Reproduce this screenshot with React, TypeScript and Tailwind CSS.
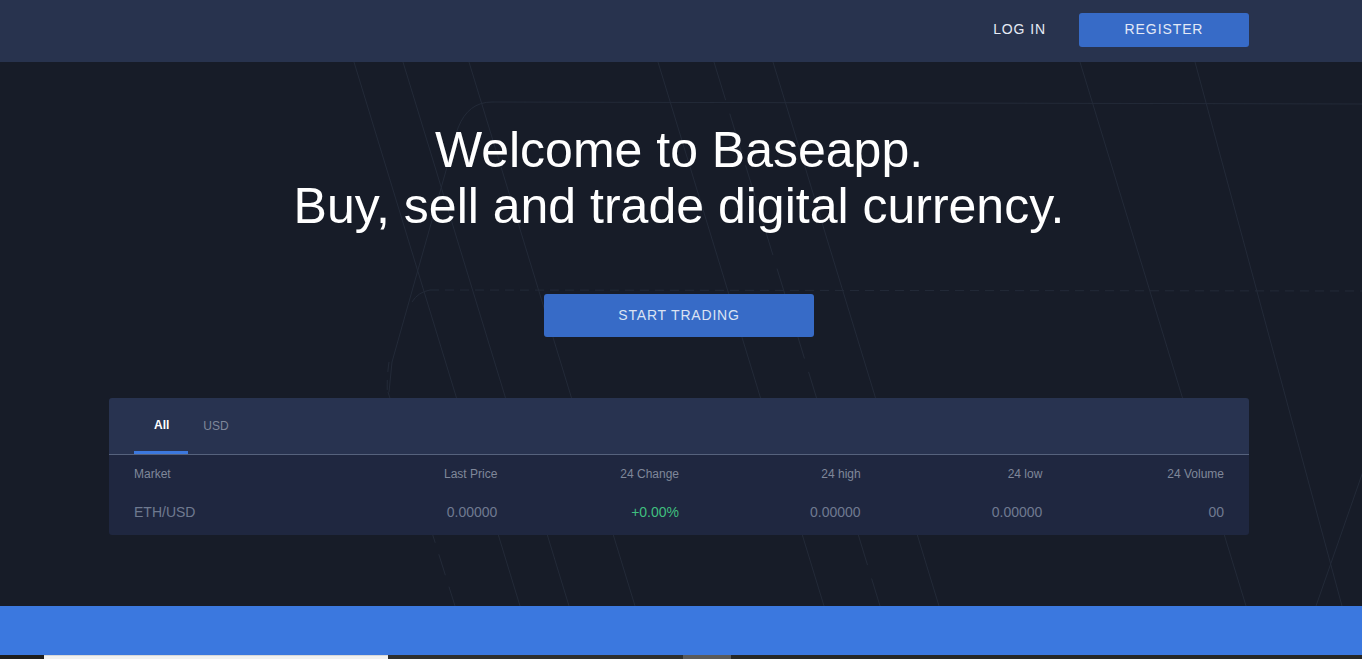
import React from "react";

const font = { fontFamily: '"Liberation Sans", Arial, sans-serif' };

function BgLines() {
  const solid = [
    [354, 520],
    [403, 569],
    [469, 635],
    [658, 824],
    [773, 939],
    [1080, 1246],
    [1195, 1342],
    [1506, 1316],
  ];
  return (
    <svg
      className="absolute inset-0 h-full w-full"
      viewBox="0 0 1362 544"
      preserveAspectRatio="none"
      fill="none"
    >
      <g stroke="#232a38" strokeWidth="1">
        {solid.map(([a, b], i) => (
          <line key={i} x1={a} y1={0} x2={b} y2={544} />
        ))}
        <line x1={714} y1={0} x2={880} y2={544} strokeDasharray="40 14" />
        <line x1={388} y1={330} x2={455} y2={544} strokeDasharray="22 12" />
        <path d="M1362 42 L492 40 Q468 40 458 66 L392 300 L389 330" />
        <path d="M389 300 Q386 320 388 340" strokeDasharray="10 8" />
        <path d="M430 228 L1362 229" strokeDasharray="9 6" />
        <path d="M430 228 Q418 230 412 240" />
      </g>
    </svg>
  );
}

export default function App() {
  const cols = ["Market", "Last Price", "24 Change", "24 high", "24 low", "24 Volume"];
  return (
    <div className="min-h-screen w-full bg-[#171c28]" style={font}>
      {/* Header */}
      <header className="flex h-[62px] items-center justify-end bg-[#28334e] pb-[3px] pr-[113px]">
        <button className="mr-[33px] text-[14px] tracking-[0.9px] text-[#e6ebf5]">LOG IN</button>
        <button className="h-[34px] w-[170px] rounded-[3px] bg-[#376bc7] text-[14px] tracking-[0.9px] text-[#e3e9f6]">
          REGISTER
        </button>
      </header>

      {/* Hero */}
      <section className="relative h-[544px] overflow-hidden">
        <BgLines />
        <div className="relative flex flex-col items-center pr-[4px] pt-[60px]">
          <h1 className="text-center text-[50px] leading-[56px] text-white">
            Welcome to Baseapp.
            <br />
            Buy, sell and trade digital currency.
          </h1>
          <button className="mt-[60px] h-[43px] w-[270px] rounded-[3px] bg-[#376bc7] text-[14px] tracking-[0.8px] text-[#dbe3f3]">
            START TRADING
          </button>

          <div className="mt-[61px] w-[1140px] overflow-hidden rounded-[3px]">
            <div className="flex h-[57px] items-end border-b border-[#56627d] bg-[#283350] pl-[25px]">
              <div className="flex h-full flex-col justify-between">
                <div className="flex flex-1 items-center px-[20px] pt-[1px] text-[12px] font-bold text-white">
                  All
                </div>
                <div className="h-[3px] w-[54px] bg-[#3c78de]"></div>
              </div>
              <div className="flex h-full items-center pb-[1px] pl-[14px] text-[12px] text-[#7f879a]">USD</div>
            </div>
            <div className="bg-[#1f2740] px-[25px] pb-[4px]">
              <div className="grid h-[38px] grid-cols-6 items-center text-[12px] text-[#7f879a]">
                {cols.map((c, i) => (
                  <div key={c} className={i === 0 ? "text-left" : "text-right"}>
                    {c}
                  </div>
                ))}
              </div>
              <div className="grid h-[38px] grid-cols-6 items-center text-[14px] text-[#6f7a90]">
                <div className="text-left">ETH/USD</div>
                <div className="text-right">0.00000</div>
                <div className="text-right text-[#3fbf7f]">+0.00%</div>
                <div className="text-right">0.00000</div>
                <div className="text-right">0.00000</div>
                <div className="text-right">00</div>
              </div>
            </div>
          </div>
        </div>
      </section>

      {/* Blue band */}
      <div className="h-[49px] bg-[#3b78df]"></div>

      {/* Next section strip */}
      <div className="flex h-[40px] bg-[#1d1d1d]">
        <div className="ml-[44px] w-[344px] border-t border-[#d8d8d8] bg-[#f1f1f1]"></div>
        <div className="w-[295px] bg-[#2e2f2e]"></div>
        <div className="w-[48px] bg-[#5a5a5a]"></div>
        <div className="flex-1 bg-[#262726]"></div>
      </div>
    </div>
  );
}
